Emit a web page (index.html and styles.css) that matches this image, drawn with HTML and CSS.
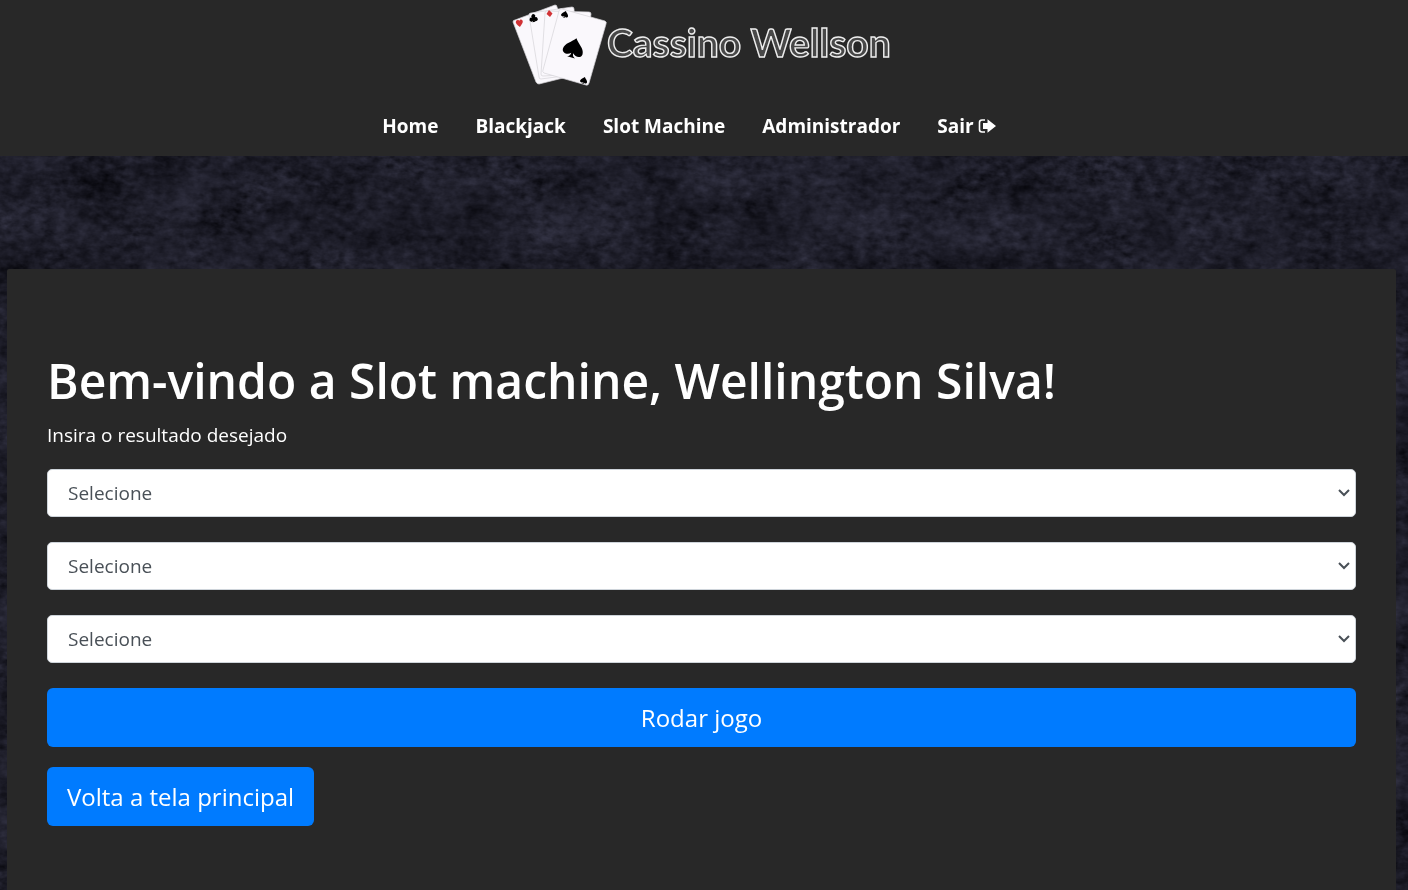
FILE: index.html
```html
<!DOCTYPE html>
<html lang="pt-BR">
<head>
<meta charset="utf-8">
<title>Cassino Wellson</title>
<link rel="stylesheet" href="styles.css">
</head>
<body>
<svg class="backdrop" aria-hidden="true">
  <filter id="stone" x="0" y="0" width="100%" height="100%" color-interpolation-filters="sRGB">
    <feTurbulence type="fractalNoise" baseFrequency="0.014 0.02" numOctaves="6" seed="8" result="coarse"/>
    <feTurbulence type="fractalNoise" baseFrequency="0.09 0.14" numOctaves="3" seed="3" result="fine"/>
    <feComposite in="coarse" in2="fine" operator="arithmetic" k2="0.5" k3="0.5"/>
    <feColorMatrix values="0.27 0 0 0 -0.02  0.27 0 0 0 -0.02  0.34 0 0 0 -0.01  0 0 0 0 1"/>
  </filter>
  <rect width="100%" height="100%" filter="url(#stone)"/>
</svg>
<header class="site-header">
  <a class="brand" href="#">
    <svg class="logo" viewBox="0 0 384 92" role="img" aria-label="Cassino Wellson">
      <g fill="#faf8fc" stroke="#d6d4d8" stroke-width="0.7" stroke-linejoin="round">
        <path d="M3 20 43 5q2 0 2 2L67 74 27 84q-2 0-3-2L1 22q0-2 2-2Z"/>
        <path d="M19 13 60 7q2 0 2 2L66 74 29 79q-2 0-2-2L17 15q0-2 2-2Z"/>
        <path d="M35 11 77 12q2 0 2 2L70 74 31 76q-2 0-2-2L33 13q0-2 2-2Z"/>
        <path d="M50 9 93 21q2 1 1 3L77 83q-1 3-3 2L32 73q-2-1-1-3L47 11q1-3 3-2Z"/>
      </g>
      <defs>
        <path id="spade" d="M0-10C3-5 10-1 10 5c0 5-6 6-9 2 0 3 1 4 3 5h-8c2-1 3-2 3-5-3 4-9 3-9-2 0-6 7-10 10-15Z"/>
      </defs>
      <use href="#spade" transform="translate(62 47) rotate(16) scale(1.02 .9)"/>
      <use href="#spade" transform="translate(53 14) rotate(16) scale(.36 .32)"/>
      <use href="#spade" transform="translate(72 80) rotate(16) scale(.36 .32)"/>
      <path transform="translate(21.500 18) rotate(-6)" d="M-1.500-.5a2 2 0 1 1 3 0 2 2 0 1 1-1 3l1 1.500h-3l1-1.500a2 2 0 1 1-1-3Z"/>
      <path fill="#d13235" d="m37 10 3.500 3.500L38 17l-3.500-3Z"/>
      <path fill="#d13235" d="M8 27C5 25 3 23 4 21c1-1.500 3-1 3.500 0 0-1.500 2-2 3-.5 1 2-1 4-2.500 6.500Z"/>
      <text class="logo-name" x="95" y="57">Cassino Wellson</text>
    </svg>
  </a>
  <nav class="menu">
    <a href="#">Home</a>
    <a href="#">Blackjack</a>
    <a href="#">Slot Machine</a>
    <a href="#">Administrador</a>
    <a class="exit" href="#">Sair
      <svg class="exit-icon" viewBox="0 0 18 16" aria-hidden="true"><path d="M7 2H4Q1.500 2 1.500 4.500v7Q1.500 14 4 14h3" fill="none" stroke="#fff" stroke-width="1.600"/><path d="M9.500 1.200 18 8l-8.500 6.800V11H5V5h4.500Z" fill="#fff"/></svg>
    </a>
  </nav>
</header>
<main class="panel">
  <h1>Bem-vindo a Slot machine, Wellington Silva!</h1>
  <form class="game">
    <label for="slot1">Insira o resultado desejado</label>
    <div class="field"><select id="slot1"><option>Selecione</option></select><svg class="caret" viewBox="0 0 12 8" aria-hidden="true"><path d="m1 1 5 5 5-5"/></svg></div>
    <div class="field"><select aria-label="Segundo resultado"><option>Selecione</option></select><svg class="caret" viewBox="0 0 12 8" aria-hidden="true"><path d="m1 1 5 5 5-5"/></svg></div>
    <div class="field"><select aria-label="Terceiro resultado"><option>Selecione</option></select><svg class="caret" viewBox="0 0 12 8" aria-hidden="true"><path d="m1 1 5 5 5-5"/></svg></div>
    <button class="btn btn-block" type="submit">Rodar jogo</button>
  </form>
  <a class="btn" href="#">Volta a tela principal</a>
</main>
</body>
</html>
```
FILE: styles.css
```css
* { box-sizing: border-box; }

body {
  margin: 0;
  min-height: 100vh;
  background: #1c1c27;
  color: #fff;
  font-family: "Segoe UI", "Open Sans", "Noto Sans", sans-serif;
  font-size: 19px;
  line-height: 30px;
}

.backdrop {
  position: fixed;
  inset: 0;
  z-index: -1;
  width: 100%;
  height: 100%;
}

.site-header {
  display: flex;
  flex-direction: column;
  align-items: center;
  background: #282828;
  padding-bottom: 15px;
}

.brand { display: block; }
.logo { display: block; width: 384px; height: 92px; }

.logo-name {
  font-family: Lato, "Open Sans", sans-serif;
  font-size: 39px;
  font-weight: 700;
  fill: #484848;
  stroke: #eee;
  stroke-width: 1.4;
}

.menu {
  display: flex;
  gap: 37px;
  padding: 19px 30px 0 0;
}

.menu a {
  display: flex;
  align-items: center;
  gap: 4px;
  color: #fff;
  font-weight: 700;
  text-decoration: none;
}

.exit-icon { width: 18px; height: 16px; }

.panel {
  margin: 113px 12px 0 7px;
  padding: 82px 40px 70px;
  background: #282828;
  border-radius: 2px;
}

h1 {
  margin: 0 0 9px;
  font-size: 48px;
  font-weight: 600;
  line-height: 60px;
}

.game { margin-bottom: 20px; }
.game label { display: block; margin-bottom: 19px; }

.field {
  position: relative;
  margin-bottom: 25px;
}

.field select {
  display: block;
  width: 100%;
  height: 48px;
  padding: 0 20px;
  appearance: none;
  border: 1px solid #ced4da;
  border-radius: 5px;
  background: #fff;
  color: #495057;
  font: inherit;
}

.caret {
  position: absolute;
  top: 20px;
  right: 6px;
  width: 12px;
  height: 8px;
  fill: none;
  stroke: #495057;
  stroke-width: 2;
  pointer-events: none;
}

.btn {
  display: inline-block;
  padding: 11px 20px;
  border: 0;
  border-radius: 6px;
  background: #007bff;
  color: #fff;
  font-family: inherit;
  font-size: 24px;
  line-height: 37px;
  text-decoration: none;
}

.btn-block {
  display: block;
  width: 100%;
}
```
